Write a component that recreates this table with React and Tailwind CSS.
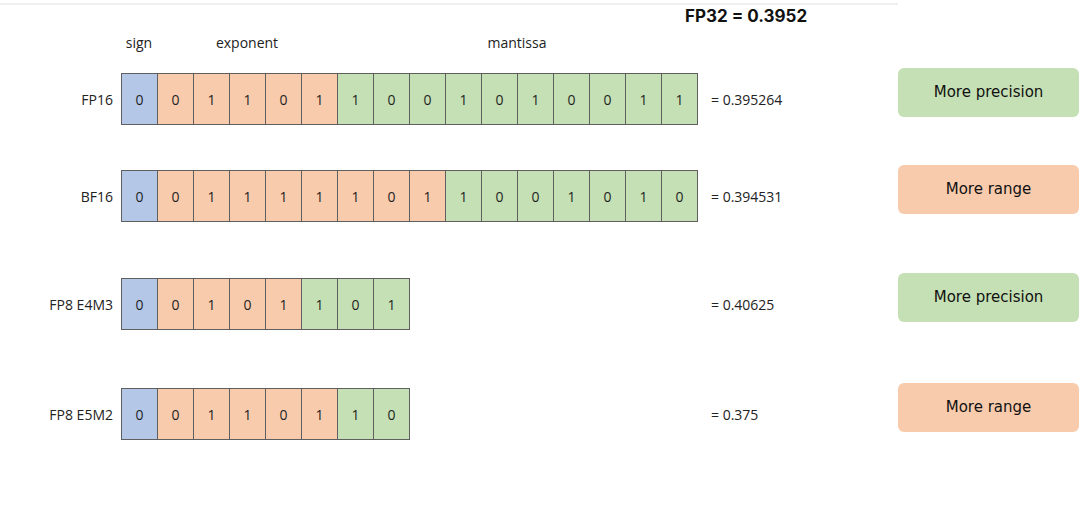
const formats = [
  {
    name: "FP16",
    exp: 5,
    bits: "0011011001010011",
    value: "= 0.395264",
    note: "More precision",
    tone: "green",
    gap: "mt-[15px]",
  },
  {
    name: "BF16",
    exp: 8,
    bits: "0011111011001010",
    value: "= 0.394531",
    note: "More range",
    tone: "orange",
    gap: "mt-[40px]",
  },
  {
    name: "FP8 E4M3",
    exp: 4,
    bits: "00101101",
    value: "= 0.40625",
    note: "More precision",
    tone: "green",
    gap: "mt-[51px]",
  },
  {
    name: "FP8 E5M2",
    exp: 5,
    bits: "00110110",
    value: "= 0.375",
    note: "More range",
    tone: "orange",
    gap: "mt-[53px]",
  },
];

const cellColor = (i, exp) => {
  if (i === 0) return "bg-[#b4c7e7]";
  if (i <= exp) return "bg-[#f8cbad]";
  return "bg-[#c5e0b4]";
};

const BitRow = ({ format }) => (
  <div className={`flex items-start ${format.gap}`}>
    <div className="mt-[5px] flex h-[52px] items-center">
      <div className="w-[121px] pr-[8px] text-right text-[14px] text-[#222]">
        {format.name}
      </div>
      <div className="w-[590px]">
        <div className="flex h-[52px] w-fit border-y border-r border-[#5f5f5f]">
          {format.bits.split("").map((b, i) => (
            <div
              key={i}
              className={`flex h-full w-[36px] items-center justify-center border-l border-[#5f5f5f] text-[14px] text-[#1f1f1f] ${cellColor(i, format.exp)}`}
            >
              {b}
            </div>
          ))}
        </div>
      </div>
      <div className="w-[187px] text-[14px] text-[#222]">{format.value}</div>
    </div>
    <div
      className={`flex h-[49px] w-[181px] items-center justify-center rounded-[6px] text-[15px] text-[#111] font-['DejaVu_Sans',sans-serif] ${
        format.tone === "green" ? "bg-[#c5e0b4]" : "bg-[#f8cbad]"
      }`}
    >
      {format.note}
    </div>
  </div>
);

const App = () => {
  return (
    <div className="h-[510px] w-[1080px] overflow-hidden bg-white font-['Open_Sans',sans-serif]">
      <div className="mt-[3px] h-[2px] w-[898px] bg-[#efefef]" />
      <div className="h-[22px] pl-[685px] text-[17px] font-bold leading-[22px] text-[#111] font-['Inter',sans-serif]">
        FP32 = 0.3952
      </div>
      <div className="ml-[121px] mt-[6px] flex h-[20px] text-[14px] leading-[20px] text-[#222]">
        <div className="w-[36px] text-center">sign</div>
        <div className="w-[180px] text-center">exponent</div>
        <div className="w-[360px] text-center">mantissa</div>
      </div>
      {formats.map((f) => (
        <BitRow key={f.name} format={f} />
      ))}
    </div>
  );
};

export default App;
